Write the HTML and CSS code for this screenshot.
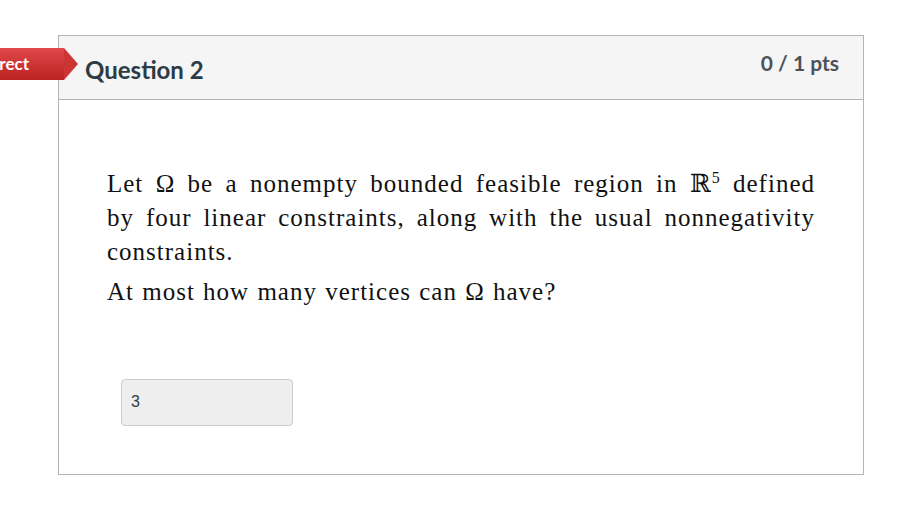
FILE: index.html
```html
<!DOCTYPE html>
<html>
<head>
<meta charset="utf-8">
<link rel="stylesheet" href="styles.css">
</head>
<body>
<div class="banner">Incorrect</div>
<div class="card">
  <div class="card-header">
    <h2 class="title">Question 2</h2>
    <div class="pts">0 / 1 pts</div>
  </div>
  <div class="card-body">
    <p class="q">Let <span class="m">Ω</span> be a nonempty bounded feasible region in <span class="m">ℝ<sup>5</sup></span> defined by&nbsp;four linear constraints, along with the usual nonnegativity constraints.</p>
    <p class="q">At most how many vertices can <span class="m">Ω</span> have?</p>
    <div class="answer">3</div>
  </div>
</div>
</body>
</html>
```
FILE: styles.css
```css
html, body {
  margin: 0;
  padding: 0;
  background: #ffffff;
}
body {
  position: relative;
  width: 922px;
  height: 514px;
  overflow: hidden;
  padding-top: 35px;
  box-sizing: border-box;
}
.banner {
  position: absolute;
  left: -60px;
  top: 48px;
  width: 124px;
  height: 32px;
  line-height: 32px;
  padding-right: 35px;
  text-align: right;
  box-sizing: border-box;
  background: linear-gradient(#e2474b, #b92320);
  color: #ffffff;
  font-family: Lato, "Liberation Sans", sans-serif;
  font-weight: 700;
  font-size: 17px;
  white-space: nowrap;
  z-index: 2;
}
.banner::after {
  content: "";
  position: absolute;
  left: 124px;
  top: 0;
  width: 0;
  height: 0;
  border-top: 16px solid transparent;
  border-bottom: 16px solid transparent;
  border-left: 14px solid #cd3434;
}
.card {
  margin-left: 58px;
  width: 806px;
  height: 440px;
  box-sizing: border-box;
  border: 1px solid #b4b4b4;
  display: flex;
  flex-direction: column;
}
.card-header {
  height: 64px;
  box-sizing: border-box;
  background: #f5f5f5;
  border-bottom: 1px solid #b4b4b4;
  display: flex;
  justify-content: space-between;
  align-items: flex-start;
  padding: 0 24px 0 26px;
}
.title {
  margin: 19px 0 0 0;
  font-family: Lato, "Liberation Sans", sans-serif;
  font-weight: 700;
  font-size: 24px;
  color: #2d3b45;
}
.pts {
  margin-top: 14px;
  font-family: Lato, "Liberation Sans", sans-serif;
  font-weight: 700;
  font-size: 21px;
  color: #4d5259;
}
.card-body {
  padding: 67px 48px 0 48px;
}
.q {
  margin: 0 0 6px 0;
  font-family: "Liberation Serif", "DejaVu Serif", serif;
  font-size: 25px;
  line-height: 34px;
  letter-spacing: 1px;
  word-spacing: 1px;
  text-align: justify;
  color: #111111;
}
.m sup {
  font-size: 16px;
  line-height: 0;
  vertical-align: 9px;
}
.answer {
  margin-top: 70px;
  margin-left: 14px;
  width: 172px;
  height: 47px;
  box-sizing: border-box;
  background: #eeeeee;
  border: 1px solid #cccccc;
  border-radius: 4px;
  padding: 13px 0 0 9px;
  font-family: "Liberation Sans", Arial, sans-serif;
  font-size: 16px;
  color: #2d3b45;
}
```
